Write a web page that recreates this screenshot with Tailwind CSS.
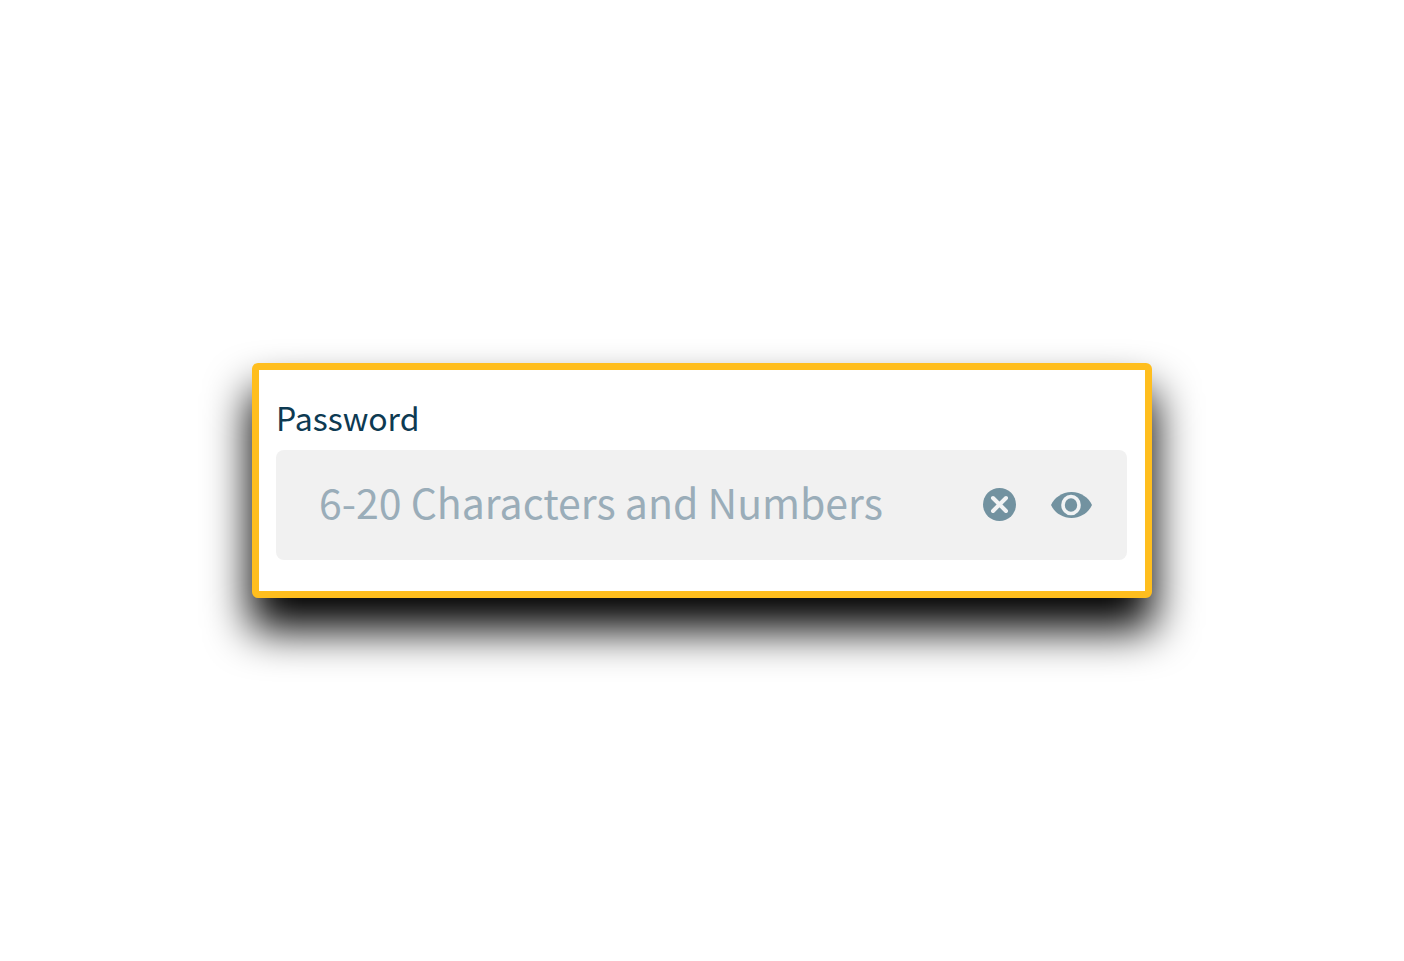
<!DOCTYPE html>
<html lang="en">
<head>
    <meta charset="UTF-8">
    <meta name="viewport" content="width=device-width, initial-scale=1.0">
    <title>Password</title>
    <!-- Tailwind CSS -->
    <script src="https://cdn.jsdelivr.net/npm/@tailwindcss/browser@4"></script>
</head>
<body class="min-h-screen flex items-center justify-center bg-white font-['Noto_Sans_CJK_SC','Noto_Sans',sans-serif]">
    <form class="w-full max-w-[900px] bg-white border-[7px] border-[#ffbe1e] rounded-md pl-[17px] pr-[18px] pt-[27px] pb-[31px] shadow-[0_30px_44px_2px_#000]">
        <label for="password" class="block mb-[13px] text-[32px] leading-10 text-[#0d3a52]">Password</label>
        <div class="flex items-center h-[110px] rounded-lg bg-[#f1f1f1] pl-[43px] pr-[35px] pb-0.5">
            <input type="password" id="password" placeholder="6-20 Characters and Numbers" class="flex-1 min-w-0 h-full pb-1.5 bg-transparent text-[41px] text-[#0d3a52] placeholder:text-[#9aadb9] focus:outline-none">
            <button type="button" id="clearBtn" aria-label="Clear" class="shrink-0">
                <svg class="block w-[33px] h-[33px]" viewBox="0 0 33 33" fill="none">
                    <circle cx="16.5" cy="16.5" r="16.5" fill="#7292a0"/>
                    <path d="M10 10l13 13M23 10L10 23" stroke="#f1f3f4" stroke-width="4" stroke-linecap="round"/>
                </svg>
            </button>
            <button type="button" id="toggleBtn" aria-label="Show password" class="shrink-0 ml-[35px]">
                <svg class="block w-[41px] h-7" viewBox="0 0 41 28" fill="none">
                    <path d="M0 15C3 8 11 2 20.500 2S38 8 41 15C38 22 30 28 20.500 28S3 22 0 15z" fill="#7292a0"/>
                    <ellipse cx="20" cy="15" rx="8" ry="8.500" stroke="#f1f3f4" stroke-width="3.600"/>
                </svg>
            </button>
        </div>
    </form>

    <script>
        const password = document.getElementById('password');

        document.getElementById('clearBtn').addEventListener('click', function() {
            password.value = '';
            password.focus();
        });

        document.getElementById('toggleBtn').addEventListener('click', function() {
            password.type = password.type === 'password' ? 'text' : 'password';
        });
    </script>
</body>
</html>
